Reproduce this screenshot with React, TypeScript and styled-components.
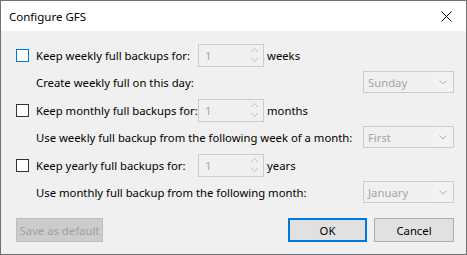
import React from 'react';
import styled, {createGlobalStyle} from "styled-components";

const GlobalStyle = createGlobalStyle`
    html, body {
        margin: 0;
        padding: 0;
        background: #ffffff;
    }
    body {
        font-family: "Noto Sans", "DejaVu Sans", sans-serif;
        font-size: 11.3px;
        color: #000000;
    }
`;

const Window = styled.div`
    width: 467px;
    height: 255px;
    box-sizing: border-box;
    border: 1px solid #707070;
    display: flex;
    flex-direction: column;
    background: #f0f0f0;
`;

const TitleBar = styled.div`
    height: 30px;
    background: #ffffff;
    display: flex;
    align-items: center;
    padding: 0 10px 0 8px;
    flex-shrink: 0;
`;

const Title = styled.div`
    flex: 1;
    font-size: 11.5px;
    padding-top: 1px;
`;

const CloseButton = styled.div`
    width: 12px;
    height: 12px;
    display: flex;
    align-items: center;
    justify-content: center;
    margin-right: 4px;
`;

const Body = styled.div`
    flex: 1;
    display: flex;
    flex-direction: column;
    padding: 12px 12px 12px 15px;
`;

const Group = styled.div`
    display: flex;
    flex-direction: column;
    gap: 3px;
    & + & {
        margin-top: 4px;
    }
`;

const Row = styled.div`
    height: 24px;
    display: flex;
    align-items: center;
`;

const SubRow = styled(Row)`
    padding-left: 20px;
`;

const Box = styled.div`
    width: 13px;
    height: 13px;
    box-sizing: border-box;
    border: 1px solid ${(props: { focused?: boolean }) => props.focused ? "#0078d7" : "#333333"};
    background: #ffffff;
    margin-right: 7px;
    flex-shrink: 0;
`;

const Label = styled.div`
    width: 162px;
    white-space: nowrap;
    color: #000000;
`;

const Spin = styled.div`
    width: 66px;
    height: 23px;
    box-sizing: border-box;
    border: 1px solid #cccccc;
    background: #f0f0f0;
    display: flex;
    align-items: center;
    padding-left: 6px;
    color: #a6a6a6;
`;

const SpinValue = styled.div`
    flex: 1;
`;

const SpinArrows = styled.div`
    width: 18px;
    display: flex;
    align-items: center;
    justify-content: center;
`;

const Unit = styled.div`
    margin-left: 3px;
`;

const SubLabel = styled.div`
    flex: 1;
    white-space: nowrap;
`;

const Combo = styled.div`
    width: 91px;
    height: 22px;
    box-sizing: border-box;
    border: 1px solid #cccccc;
    background: #f0f0f0;
    display: flex;
    align-items: center;
    color: #a6a6a6;
    flex-shrink: 0;
`;

const ComboText = styled.div`
    flex: 1;
    padding-left: 4px;
`;

const ComboArrow = styled.div`
    width: 20px;
    height: 100%;
    display: flex;
    align-items: center;
    justify-content: center;
    background: #f2f2f2;
`;

const Footer = styled.div`
    margin-top: auto;
    display: flex;
    align-items: center;
    gap: 7px;
`;

const Button = styled.div`
    height: 24px;
    box-sizing: border-box;
    width: ${(props: { w: number }) => props.w}px;
    display: flex;
    align-items: center;
    justify-content: center;
    background: #e1e1e1;
    border: 1px solid #adadad;
`;

const DisabledButton = styled(Button)`
    background: #cccccc;
    border-color: #bfbfbf;
    color: #a0a0a0;
    margin-right: auto;
`;

const DefaultButton = styled(Button)`
    border: 2px solid #0078d7;
`;

const SpinIcon = () => (
    <svg width="9" height="16" viewBox="0 0 9 16">
        <polyline points="1,5 4.5,1.5 8,5" fill="none" stroke="#c2c2c2" strokeWidth="1"/>
        <polyline points="1,11 4.5,14.5 8,11" fill="none" stroke="#c2c2c2" strokeWidth="1"/>
    </svg>
);

const ChevronDown = () => (
    <svg width="8" height="5" viewBox="0 0 8 5">
        <polyline points="0.5,0.5 4,4 7.5,0.5" fill="none" stroke="#b0b0b0" strokeWidth="1"/>
    </svg>
);

const CloseIcon = () => (
    <svg width="11" height="11" viewBox="0 0 11 11">
        <line x1="0.5" y1="0.5" x2="10.5" y2="10.5" stroke="#000" strokeWidth="1"/>
        <line x1="10.5" y1="0.5" x2="0.5" y2="10.5" stroke="#000" strokeWidth="1"/>
    </svg>
);

interface PeriodProps {
    label: string,
    unit: string,
    subLabel: string,
    option: string,
    focused?: boolean
}

const Period = (props: PeriodProps) => {
    return <Group>
        <Row>
            <Box focused={props.focused}/>
            <Label>{props.label}</Label>
            <Spin>
                <SpinValue>1</SpinValue>
                <SpinArrows><SpinIcon/></SpinArrows>
            </Spin>
            <Unit>{props.unit}</Unit>
        </Row>
        <SubRow>
            <SubLabel>{props.subLabel}</SubLabel>
            <Combo>
                <ComboText>{props.option}</ComboText>
                <ComboArrow><ChevronDown/></ComboArrow>
            </Combo>
        </SubRow>
    </Group>;
};

const App = () => {
    return <>
        <GlobalStyle/>
        <Window>
            <TitleBar>
                <Title>Configure GFS</Title>
                <CloseButton><CloseIcon/></CloseButton>
            </TitleBar>
            <Body>
                <Period focused label="Keep weekly full backups for:" unit="weeks"
                        subLabel="Create weekly full on this day:" option="Sunday"/>
                <Period label="Keep monthly full backups for:" unit="months"
                        subLabel="Use weekly full backup from the following week of a month:" option="First"/>
                <Period label="Keep yearly full backups for:" unit="years"
                        subLabel="Use monthly full backup from the following month:" option="January"/>
                <Footer>
                    <DisabledButton w={87}>Save as default</DisabledButton>
                    <DefaultButton w={79}>OK</DefaultButton>
                    <Button w={80}>Cancel</Button>
                </Footer>
            </Body>
        </Window>
    </>;
};

export default App;
